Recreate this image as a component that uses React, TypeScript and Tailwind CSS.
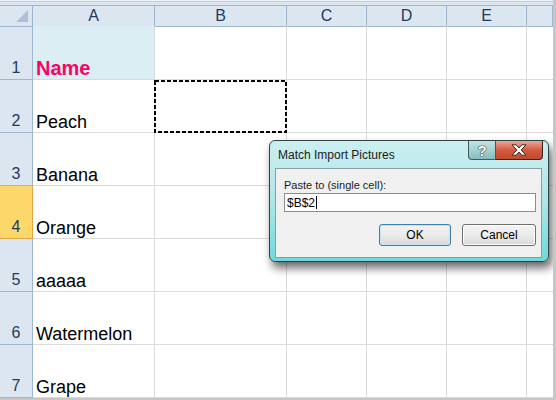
import React from "react";

const rows: { n: number; h: string; text: string; special?: "name" | "sel" }[] = [
  { n: 1, h: "h-[54px]", text: "Name", special: "name" },
  { n: 2, h: "h-[53px]", text: "Peach" },
  { n: 3, h: "h-[53px]", text: "Banana" },
  { n: 4, h: "h-[53px]", text: "Orange", special: "sel" },
  { n: 5, h: "h-[53px]", text: "aaaaa" },
  { n: 6, h: "h-[53px]", text: "Watermelon" },
  { n: 7, h: "h-[53px]", text: "Grape" },
];

const colLetters = ["A", "B", "C", "D", "E", ""];

function Marquee() {
  return (
    <svg className="absolute left-[-1px] top-0 pointer-events-none" width="134" height="53" viewBox="0 0 134 53">
      <rect x="1" y="1" width="131" height="51" fill="none" stroke="#000" strokeWidth="2" strokeDasharray="4 2" />
    </svg>
  );
}

export default function App() {
  return (
    <div className="w-[556px] h-[400px] relative overflow-hidden bg-white border-r-[3px] border-b-[2px] border-[#c6c6c6] font-['Liberation_Sans',Arial,sans-serif]">
      {/* top strip */}
      <div className="h-[6px] bg-[#dce6f1] border-b border-[#9eb6ce] flex flex-col">
        <div className="h-[1px] bg-[#eef2f8]" />
        <div className="h-[1px] bg-[#c3cfdf]" />
      </div>
      {/* header row */}
      <div className="grid grid-cols-[33px_122px_132px_80px_80px_80px_26px] h-[20px]">
        <div className="relative bg-[#dce6f1] border-r border-b border-[#9eb6ce]">
          <svg className="absolute left-[16px] top-[4px]" width="13" height="12" viewBox="0 0 13 12">
            <polygon points="12,0 12,12 0,12" fill="#aebfd6" />
          </svg>
        </div>
        {colLetters.map((c, i) => (
          <div
            key={i}
            className="bg-[#dce6f1] border-r border-b border-[#9eb6ce] flex items-center justify-center text-[16px] leading-[20px] text-[#213a63]"
          >
            {c}
          </div>
        ))}
      </div>
      {/* body rows */}
      {rows.map((r) => (
        <div key={r.n} className={`grid grid-cols-[33px_122px_132px_80px_80px_80px_26px] ${r.h}`}>
          <div
            className={
              r.special === "sel"
                ? "bg-[#fcd86b] border-r border-b border-[#e2a847] flex items-end justify-center text-[16px] leading-[20px] pb-[1px] text-[#213a63]"
                : "bg-[#dce6f1] border-r border-b border-[#9eb6ce] flex items-end justify-center text-[16px] leading-[20px] pb-[1px] text-[#213a63]"
            }
          >
            {r.n}
          </div>
          <div
            className={
              r.special === "name"
                ? "bg-[#daeef3] border-r border-b border-[#dadada] flex items-end pl-[3px] text-[20px] leading-[22px] font-bold text-[#ff0066]"
                : "border-r border-b border-[#dadada] flex items-end pl-[3px] text-[18px] leading-[20px] text-black"
            }
          >
            {r.text}
          </div>
          <div className="relative border-r border-b border-[#dadada]">{r.n === 2 && <Marquee />}</div>
          <div className="border-r border-b border-[#dadada]" />
          <div className="border-r border-b border-[#dadada]" />
          <div className="border-r border-b border-[#dadada]" />
          <div className="border-b border-[#dadada]" />
        </div>
      ))}

      {/* dialog */}
      <div className="absolute left-[269px] top-[140px] w-[280px] h-[122px] rounded-[6px] border border-[#2d4346] bg-gradient-to-b from-[#cbeff0] via-[#b0e6e7] to-[#6fd8d9] shadow-[3px_6px_10px_rgba(0,0,0,0.6)] flex flex-col">
        <div className="h-[27px] flex items-start">
          <div className="flex-1 pl-[8px] pt-[7px] text-[12px] leading-[15px] text-[#1b1b1b]">Match Import Pictures</div>
          <div className="flex mr-[5px]">
            <div className="w-[28px] h-[19px] rounded-bl-[4px] border border-t-0 border-[#41595b] bg-gradient-to-b from-[#c3e2e3] via-[#a6d1d2] to-[#86bcbe] flex items-center justify-center text-[15px] leading-[15px] font-bold text-white [text-shadow:0_0_1px_#1d2b2c,0_0_1px_#1d2b2c,0_0_1px_#1d2b2c]">
              ?
            </div>
            <div className="w-[47px] h-[19px] rounded-br-[4px] border border-t-0 border-l-0 border-[#3a2622] bg-gradient-to-b from-[#eba797] via-[#d45a41] to-[#c14a31] flex items-center justify-center">
              <svg width="18" height="12" viewBox="0 0 18 12">
                <path
                  d="M2 0.8 H6.2 L9 4 L11.8 0.8 H16 L11.2 6 L16 11.2 H11.8 L9 8 L6.2 11.2 H2 L6.8 6 Z"
                  fill="#ffffff"
                  stroke="#3a2a27"
                  strokeWidth="1"
                  strokeLinejoin="round"
                />
              </svg>
            </div>
          </div>
        </div>
        <div className="ml-[5px] mr-[6px] mb-[3px] flex-1 bg-[#f0f0f0] border border-[#86a0a2] pl-[8px] pr-[5px] pt-[9px] flex flex-col">
          <div className="text-[11px] leading-[14px] text-[#1b1b1b]">Paste to (single cell):</div>
          <div className="mt-[1px] w-[252px] h-[19px] bg-white border border-[#8a8c8e] flex items-center pl-[2px] text-[12px] leading-[14px] text-black">
            <span>$B$2</span>
            <span className="w-[1px] h-[13px] bg-black ml-[1px]" />
          </div>
          <div className="mt-[12px] flex justify-end gap-[11px]">
            <div className="w-[72px] h-[22px] rounded-[3px] border border-[#3c7fb1] bg-gradient-to-b from-[#f4f4f4] via-[#ebebeb] to-[#d9d9d9] shadow-[inset_0_0_0_1px_#c4e5f6] flex items-center justify-center text-[12px] leading-[14px] text-black">
              OK
            </div>
            <div className="w-[74px] h-[22px] rounded-[3px] border border-[#707070] bg-gradient-to-b from-[#f4f4f4] via-[#ebebeb] to-[#d9d9d9] shadow-[inset_0_0_0_1px_#fcfcfc] flex items-center justify-center text-[12px] leading-[14px] text-black">
              Cancel
            </div>
          </div>
        </div>
      </div>
    </div>
  );
}
